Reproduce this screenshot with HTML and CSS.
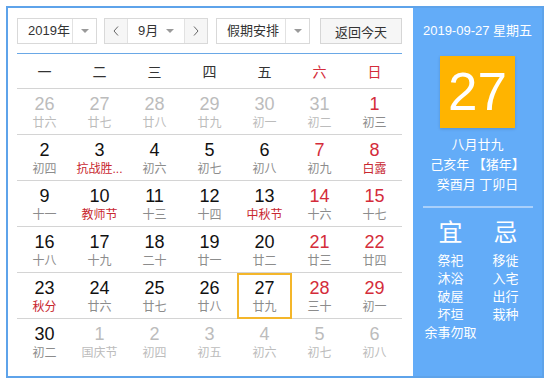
FILE: index.html
```html
<!DOCTYPE html>
<html lang="zh">
<head>
    <meta charset="UTF-8">
    <title>万年历</title>
    <link rel="stylesheet" href="styles.css">
</head>
<body>
    <div class="calendar">
        <div class="main">
            <div class="toolbar">
                <div class="select year">
                    <span class="select-text">2019年</span>
                    <span class="select-arrow"><i class="tri"></i></span>
                </div>
                <div class="month-group">
                    <span class="nav-btn">
                        <svg width="6" height="10" viewBox="0 0 6 10"><polyline points="5,0.5 1,5 5,9.5" fill="none" stroke="#666" stroke-width="1"/></svg>
                    </span>
                    <span class="month-sel">
                        <span>9月</span>
                        <i class="tri"></i>
                    </span>
                    <span class="nav-btn">
                        <svg width="6" height="10" viewBox="0 0 6 10"><polyline points="1,0.5 5,5 1,9.5" fill="none" stroke="#666" stroke-width="1"/></svg>
                    </span>
                </div>
                <div class="select holiday">
                    <span class="select-text">假期安排</span>
                    <span class="select-arrow"><i class="tri"></i></span>
                </div>
                <button class="today-btn">返回今天</button>
            </div>

            <div class="week">
                <span>一</span><span>二</span><span>三</span><span>四</span><span>五</span>
                <span class="red">六</span><span class="red">日</span>
            </div>

            <div class="days">
                <div class="day other"><b>26</b><em>廿六</em></div>
                <div class="day other"><b>27</b><em>廿七</em></div>
                <div class="day other"><b>28</b><em>廿八</em></div>
                <div class="day other"><b>29</b><em>廿九</em></div>
                <div class="day other"><b>30</b><em>初一</em></div>
                <div class="day other"><b>31</b><em>初二</em></div>
                <div class="day weekend"><b>1</b><em>初三</em></div>

                <div class="day"><b>2</b><em>初四</em></div>
                <div class="day"><b>3</b><em class="fest">抗战胜...</em></div>
                <div class="day"><b>4</b><em>初六</em></div>
                <div class="day"><b>5</b><em>初七</em></div>
                <div class="day"><b>6</b><em>初八</em></div>
                <div class="day weekend"><b>7</b><em>初九</em></div>
                <div class="day weekend"><b>8</b><em class="fest">白露</em></div>

                <div class="day"><b>9</b><em>十一</em></div>
                <div class="day"><b>10</b><em class="fest">教师节</em></div>
                <div class="day"><b>11</b><em>十三</em></div>
                <div class="day"><b>12</b><em>十四</em></div>
                <div class="day"><b>13</b><em class="fest">中秋节</em></div>
                <div class="day weekend"><b>14</b><em>十六</em></div>
                <div class="day weekend"><b>15</b><em>十七</em></div>

                <div class="day"><b>16</b><em>十八</em></div>
                <div class="day"><b>17</b><em>十九</em></div>
                <div class="day"><b>18</b><em>二十</em></div>
                <div class="day"><b>19</b><em>廿一</em></div>
                <div class="day"><b>20</b><em>廿二</em></div>
                <div class="day weekend"><b>21</b><em>廿三</em></div>
                <div class="day weekend"><b>22</b><em>廿四</em></div>

                <div class="day"><b>23</b><em class="fest">秋分</em></div>
                <div class="day"><b>24</b><em>廿六</em></div>
                <div class="day"><b>25</b><em>廿七</em></div>
                <div class="day"><b>26</b><em>廿八</em></div>
                <div class="day today"><b>27</b><em>廿九</em></div>
                <div class="day weekend"><b>28</b><em>三十</em></div>
                <div class="day weekend"><b>29</b><em>初一</em></div>

                <div class="day last"><b>30</b><em>初二</em></div>
                <div class="day other last"><b>1</b><em>国庆节</em></div>
                <div class="day other last"><b>2</b><em>初四</em></div>
                <div class="day other last"><b>3</b><em>初五</em></div>
                <div class="day other last"><b>4</b><em>初六</em></div>
                <div class="day other last"><b>5</b><em>初七</em></div>
                <div class="day other last"><b>6</b><em>初八</em></div>
            </div>
        </div>

        <div class="side">
            <div class="side-date">2019-09-27 星期五</div>
            <div class="big-day">27</div>
            <div class="lunar-info">
                <p>八月廿九</p>
                <p>己亥年 【猪年】</p>
                <p>癸酉月 丁卯日</p>
            </div>
            <div class="divider"></div>
            <div class="almanac">
                <div class="col">
                    <h3>宜</h3>
                    <p>祭祀</p>
                    <p>沐浴</p>
                    <p>破屋</p>
                    <p>坏垣</p>
                    <p>余事勿取</p>
                </div>
                <div class="col">
                    <h3>忌</h3>
                    <p>移徙</p>
                    <p>入宅</p>
                    <p>出行</p>
                    <p>栽种</p>
                </div>
            </div>
        </div>
    </div>
</body>
</html>
```

FILE: styles.css
```css
* {
    box-sizing: border-box;
}
body {
    margin: 0;
    padding: 6px;
    font-family: "Liberation Sans", Arial, "Noto Sans CJK SC", sans-serif;
    background-color: #fff;
    color: #333;
}
.calendar {
    display: flex;
    width: 538px;
    height: 372px;
    border: 2px solid #5ea3ea;
    background-color: #fff;
}
.main {
    width: 405px;
    padding: 10px 11px 0 9px;
}
.toolbar {
    display: flex;
    height: 26px;
    font-size: 13px;
}
.select {
    display: flex;
    border: 1px solid #d9d9d9;
    background-color: #fff;
}
.select.year {
    width: 80px;
    margin-right: 7px;
}
.select.holiday {
    width: 94px;
    margin-right: 10px;
}
.select-text {
    flex: 1;
    line-height: 24px;
    padding-left: 10px;
}
.select-arrow {
    width: 24px;
    border-left: 1px solid #e2e2e2;
    display: flex;
    justify-content: center;
    align-items: center;
}
.tri {
    width: 0;
    height: 0;
    border-left: 4px solid transparent;
    border-right: 4px solid transparent;
    border-top: 4px solid #9a9a9a;
}
.month-group {
    display: flex;
    width: 104px;
    margin-right: 8px;
    border: 1px solid #d9d9d9;
}
.nav-btn {
    width: 22px;
    background-color: #f6f6f6;
    display: flex;
    justify-content: center;
    align-items: center;
}
.month-sel {
    flex: 1;
    display: flex;
    align-items: center;
    justify-content: space-between;
    padding: 0 10px 0 10px;
    border-left: 1px solid #e2e2e2;
    border-right: 1px solid #e2e2e2;
    line-height: 24px;
}
.today-btn {
    width: 82px;
    height: 26px;
    padding: 0;
    border: 1px solid #d6d6d6;
    background-color: #f6f6f6;
    font-family: inherit;
    font-size: 13px;
    color: #333;
}
.week {
    display: grid;
    grid-template-columns: repeat(7, 55px);
    margin-top: 9px;
    height: 36px;
    border-top: 1px solid #6aa8e6;
    border-bottom: 1px solid #d4d4d4;
    font-size: 14px;
    color: #333;
}
.week span {
    display: flex;
    justify-content: center;
    align-items: center;
}
.week .red {
    color: #d42c3a;
}
.days {
    display: grid;
    grid-template-columns: repeat(7, 55px);
}
.day {
    height: 46px;
    border-bottom: 1px solid #d4d4d4;
    padding-top: 5px;
    display: flex;
    flex-direction: column;
    align-items: center;
}
.day.last {
    border-bottom: none;
}
.day b {
    font-weight: normal;
    font-size: 18px;
    line-height: 20px;
    color: #111;
}
.day em {
    font-style: normal;
    font-size: 12px;
    line-height: 18px;
    color: #8c8c8c;
    white-space: nowrap;
}
.day em.fest {
    color: #c8272f;
}
.day.weekend b {
    color: #d42c3a;
}
.day.other b,
.day.other em {
    color: #bcbcbc;
}
.day.today {
    outline: 2px solid #f4b62a;
    outline-offset: -2px;
}
.side {
    flex: 1;
    background-color: #63acf8;
    color: #fff;
    padding-top: 13px;
    text-align: center;
}
.side-date {
    font-size: 13px;
    line-height: 20px;
}
.big-day {
    width: 75px;
    height: 72px;
    margin: 15px auto 0;
    background-color: #ffb400;
    box-shadow: 0 1px 3px rgba(0, 0, 0, 0.15);
    font-size: 53px;
    line-height: 72px;
}
.lunar-info {
    margin-top: 7px;
    font-size: 13px;
    line-height: 20px;
}
.lunar-info p {
    margin: 0;
}
.divider {
    height: 2px;
    margin: 11px 9px 0 10px;
    background-color: #a9d0fb;
}
.almanac {
    display: flex;
    margin: 10px 9px 0 10px;
}
.almanac .col {
    flex: 1;
}
.almanac h3 {
    margin: 0 0 4px;
    font-size: 24px;
    font-weight: normal;
    line-height: 30px;
}
.almanac p {
    margin: 0;
    font-size: 13px;
    line-height: 18px;
    white-space: nowrap;
}
```
